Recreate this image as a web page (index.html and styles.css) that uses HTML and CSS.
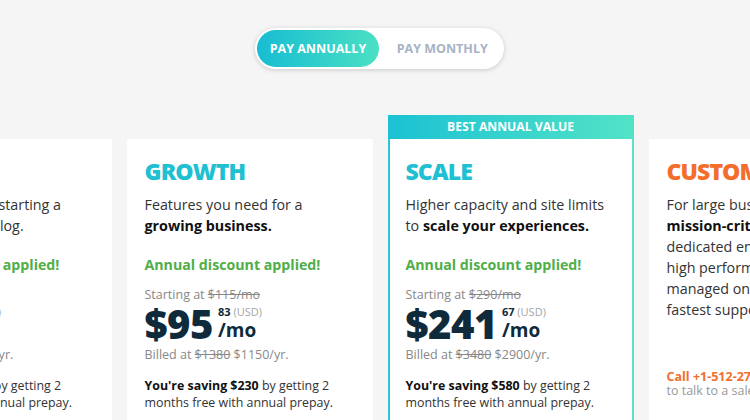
FILE: index.html
```html
<!DOCTYPE html>
<html lang="en">
<head>
<meta charset="UTF-8">
<meta name="viewport" content="width=device-width, initial-scale=1.0">
<title>Plans</title>
<link rel="stylesheet" href="styles.css">
</head>
<body class="page">
  <div class="switch">
    <div class="toggle">
      <span class="opt active">PAY ANNUALLY</span>
      <span class="opt">PAY MONTHLY</span>
    </div>
  </div>

  <div class="plans">
    <div class="card">
      <h2 class="name teal">STARTUP</h2>
      <p class="desc">Perfect for those starting a<br>a small site or a blog.</p>
      <p class="deal">Annual discount applied!</p>
      <p class="from">Starting at <s>$30/mo</s></p>
      <div class="price">
        <span class="amount">$25</span>
        <span class="side">
          <span class="sup"><b>00</b> <span class="usd">(USD)</span></span>
          <span class="per">/mo</span>
        </span>
      </div>
      <p class="from billed">Billed at <s>$360</s> $300/yr.</p>
      <p class="save"><b>You're saving $60</b> by getting 2<br>months free with annual prepay.</p>
    </div>

    <div class="card">
      <h2 class="name teal">GROWTH</h2>
      <p class="desc">Features you need for a<br><b>growing business.</b></p>
      <p class="deal">Annual discount applied!</p>
      <p class="from">Starting at <s>$115/mo</s></p>
      <div class="price">
        <span class="amount">$95</span>
        <span class="side">
          <span class="sup"><b>83</b> <span class="usd">(USD)</span></span>
          <span class="per">/mo</span>
        </span>
      </div>
      <p class="from billed">Billed at <s>$1380</s> $1150/yr.</p>
      <p class="save"><b>You're saving $230</b> by getting 2<br>months free with annual prepay.</p>
    </div>

    <div class="card best">
      <div class="band">BEST ANNUAL VALUE</div>
      <h2 class="name teal">SCALE</h2>
      <p class="desc">Higher capacity and site limits<br>to <b>scale your experiences.</b></p>
      <p class="deal">Annual discount applied!</p>
      <p class="from">Starting at <s>$290/mo</s></p>
      <div class="price">
        <span class="amount">$241</span>
        <span class="side">
          <span class="sup"><b>67</b> <span class="usd">(USD)</span></span>
          <span class="per">/mo</span>
        </span>
      </div>
      <p class="from billed">Billed at <s>$3480</s> $2900/yr.</p>
      <p class="save"><b>You're saving $580</b> by getting 2<br>months free with annual prepay.</p>
    </div>

    <div class="card">
      <h2 class="name orange">CUSTOM</h2>
      <p class="desc">For large businesses with<br><b>mission-critical sites</b> needing<br>dedicated environments,<br>high performance,<br>managed onboarding and the<br>fastest support.</p>
      <p class="call"><b>Call +1-512-273-3906</b><br>to talk to a sales expert.</p>
    </div>
  </div>
</body>
</html>
```

FILE: styles.css
```css
.page {
  margin: 0;
  padding: 28px 0 0 9px;
  background-color: #f5f5f5;
  font-family: "Open Sans", "Liberation Sans", sans-serif;
  color: #333;
  overflow: hidden;
  height: 420px;
  box-sizing: border-box;
}
p, h2 {
  margin: 0;
}
b {
  color: #111;
}

/* billing switch */
.switch {
  text-align: center;
}
.toggle {
  display: inline-flex;
  padding: 2px;
  background: #fff;
  border-radius: 21px;
  box-shadow: 0 1px 5px rgba(0, 0, 0, 0.18);
}
.opt {
  height: 37px;
  line-height: 37px;
  padding: 0 14px 0 18px;
  border-radius: 19px;
  font-size: 12.5px;
  font-weight: 700;
  color: #a7b3c6;
}
.opt.active {
  padding: 0 12.5px;
  color: #fff;
  background: linear-gradient(to right, #17bdd2, #4be0c4);
}

/* plan cards */
.plans {
  display: flex;
  justify-content: center;
  align-items: flex-start;
  gap: 15px;
  margin: 46px 0 0 1px;
}
.card {
  flex: 0 0 246px;
  box-sizing: border-box;
  min-height: 330px;
  margin-top: 24px;
  padding: 15px 16px;
  background: #fff;
  border: 2px solid #fff;
}
.card.best {
  margin-top: 0;
  padding-top: 0;
  border-top-width: 0;
  border-image: linear-gradient(to right, #2dc6d3, #5ee2c7) 1;
}
.band {
  margin: 0 -18px 17px;
  height: 24px;
  line-height: 24px;
  text-align: center;
  font-size: 12.2px;
  font-weight: 700;
  color: #fff;
  background: linear-gradient(to right, #1cc2d3, #52e3c6);
}
.name {
  font-size: 23px;
  line-height: 30px;
  font-weight: 800;
  letter-spacing: -0.9px;
  margin-bottom: 8px;
}
.teal {
  color: #1fc0d2;
}
.orange {
  color: #f36e2c;
}
.desc {
  font-size: 14.3px;
  line-height: 21px;
  margin-bottom: 18px;
  white-space: nowrap;
}
.deal {
  font-size: 14.2px;
  line-height: 21px;
  font-weight: 700;
  color: #4fae47;
  margin-bottom: 11px;
}
.from {
  font-size: 12.5px;
  line-height: 18px;
  color: #888;
}
.billed {
  margin-top: 2px;
}
.price {
  display: flex;
  color: #0e2a3b;
}
.amount {
  font-size: 40px;
  line-height: 40px;
  font-weight: 800;
  letter-spacing: -0.5px;
}
.side {
  display: flex;
  flex-direction: column;
  justify-content: space-between;
  margin-left: 5px;
  padding: 1px 0 4px;
}
.sup {
  font-size: 11px;
  line-height: 13px;
}
.sup b {
  color: #0e2a3b;
}
.usd {
  color: #a5a5a5;
}
.per {
  font-size: 19px;
  line-height: 19px;
  font-weight: 700;
}
.save {
  font-size: 12.4px;
  line-height: 17px;
  margin-top: 13px;
  white-space: nowrap;
}
.call {
  margin-top: 50px;
  font-size: 12.5px;
  line-height: 13.5px;
  color: #999;
}
.call b {
  color: #f36e2c;
}
```
